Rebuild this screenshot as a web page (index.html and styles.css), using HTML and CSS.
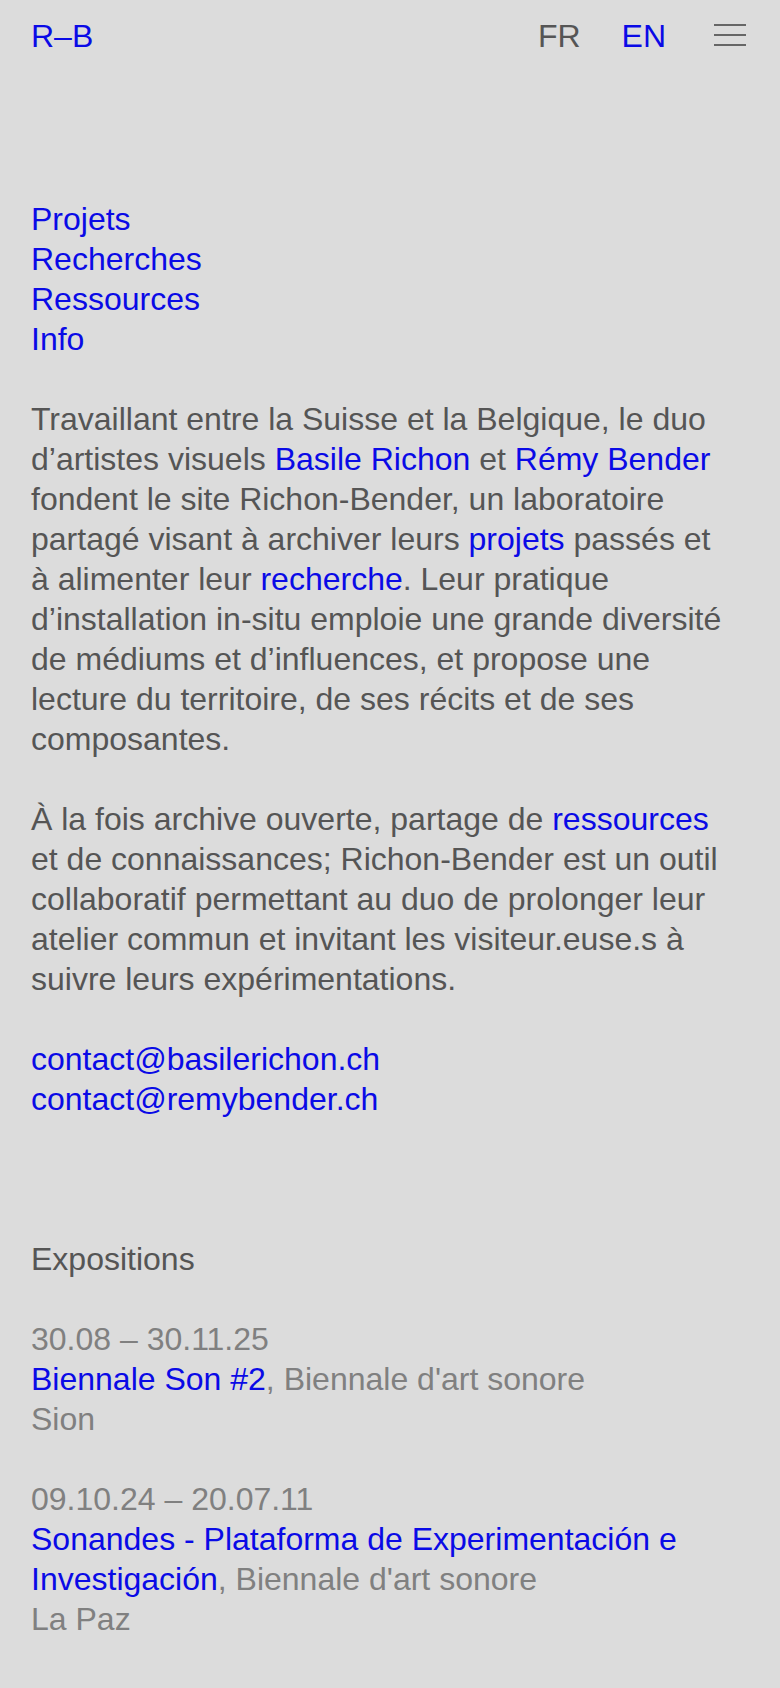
FILE: index.html
```html
<!DOCTYPE html>
<html lang="fr">
<head>
<meta charset="utf-8">
<title>Richon-Bender</title>
<link rel="stylesheet" href="styles.css">
</head>
<body>
<header class="topbar">
  <a class="logo link" href="#">R–B</a>
  <nav class="tools">
    <a class="lang lang-fr" href="#">FR</a>
    <a class="lang lang-en link" href="#">EN</a>
    <button class="burger" aria-label="Menu">
      <svg width="32" height="22" viewBox="0 0 32 22"><path d="M0 1H32M0 11H32M0 21H32" stroke="#666" stroke-width="2" fill="none"/></svg>
    </button>
  </nav>
</header>
<main class="content">
  <nav class="menu">
    <a class="link" href="#">Projets</a>
    <a class="link" href="#">Recherches</a>
    <a class="link" href="#">Ressources</a>
    <a class="link" href="#">Info</a>
  </nav>
  <p class="text">Travaillant entre la Suisse et la Belgique, le duo d’artistes visuels <a class="link" href="#">Basile Richon</a> et <a class="link" href="#">Rémy Bender</a> fondent le site Richon-Bender, un laboratoire partagé visant à archiver leurs <a class="link" href="#">projets</a> passés et à alimenter leur <a class="link" href="#">recherche</a>. Leur pratique d’installation in-situ emploie une grande diversité de médiums et d’influences, et propose une lecture du territoire, de ses récits et de ses composantes.</p>
  <p class="text">À la fois archive ouverte, partage de <a class="link" href="#">ressources</a> et de connaissances; Richon-Bender est un outil collaboratif permettant au duo de prolonger leur atelier commun et invitant les visiteur.euse.s à suivre leurs expérimentations.</p>
  <div class="contacts">
    <a class="link" href="#">contact@basilerichon.ch</a>
    <a class="link" href="#">contact@remybender.ch</a>
  </div>
  <section class="expos">
    <h2 class="expos-title">Expositions</h2>
    <div class="expo">
      <div class="date">30.08 – 30.11.25</div>
      <div class="title"><a class="link" href="#">Biennale Son #2</a>, Biennale d'art sonore</div>
      <div class="place">Sion</div>
    </div>
    <div class="expo">
      <div class="date">09.10.24 – 20.07.11</div>
      <div class="title"><a class="link" href="#">Sonandes - Plataforma de Experimentación e Investigación</a>, Biennale d'art sonore</div>
      <div class="place">La Paz</div>
    </div>
    <div class="expo">
      <div class="date">26.11 – 17.12.22</div>
      <div class="title"><a class="link" href="#">Exposition collective</a>, Galerie</div>
      <div class="place">Bruxelles</div>
    </div>
  </section>
</main>
</body>
</html>
```
FILE: styles.css
```css
html, body {
  margin: 0;
  padding: 0;
}
body {
  background: #dcdcdc;
  color: #555555;
  font-family: "Liberation Sans", Arial, sans-serif;
  font-size: 32px;
  line-height: 40px;
}
a {
  text-decoration: none;
  color: inherit;
}
.link {
  color: #0a0ae6;
}
.topbar {
  display: flex;
  justify-content: space-between;
  align-items: center;
  padding: 16px 34px 0 31px;
  height: 40px;
}
.tools {
  display: flex;
  align-items: center;
}
.lang {
  color: #555555;
}
.lang-fr {
  margin-right: 41px;
}
.lang-en {
  margin-right: 48px;
}
.lang.link {
  color: #0a0ae6;
}
.burger {
  border: 0;
  padding: 0;
  margin: -2px 0 0 0;
  background: none;
  display: block;
  width: 32px;
  height: 22px;
}
.burger svg {
  display: block;
}
.content {
  padding: 143px 55px 0 31px;
}
.menu {
  display: flex;
  flex-direction: column;
  margin-bottom: 40px;
}
.text {
  margin: 0 0 40px 0;
}
.contacts {
  display: flex;
  flex-direction: column;
}
.expos {
  margin-top: 120px;
}
.expos-title {
  font-size: inherit;
  font-weight: normal;
  margin: 0 0 40px 0;
}
.expo {
  margin-bottom: 40px;
  color: #808080;
}
```
